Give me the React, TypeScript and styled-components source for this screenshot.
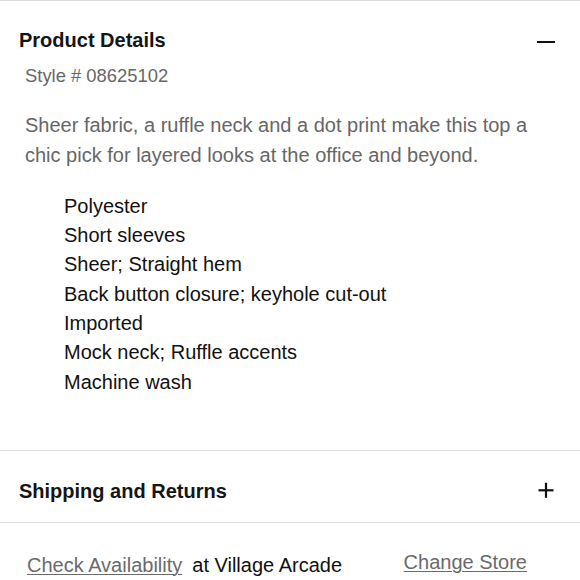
import React from 'react';
import styled, { createGlobalStyle } from 'styled-components';

const GlobalStyle = createGlobalStyle`
	body {
		margin: 0;
		background: #fff;
		font-family: "Liberation Sans", Arial, Helvetica, sans-serif;
		color: #111;
	}
`;

const Page = styled.div`
	width: 580px;
	height: 580px;
	overflow: hidden;
`;

const Section = styled.section`
	border-top: 1px solid #dcdcdc;
`;

const Header = styled.div<{ $top: number; $bottom: number }>`
	display: flex;
	align-items: center;
	justify-content: space-between;
	padding: ${(p) => p.$top}px 25px ${(p) => p.$bottom}px 19px;
`;

const Heading = styled.h2`
	margin: 0;
	font-size: 20px;
	line-height: 24px;
	font-weight: 700;
	color: #151515;
`;

const Toggle = styled.svg`
	display: block;
	width: 18px;
	height: 24px;
	color: #111;
`;

const Body = styled.div`
	padding: 0 0 53px 25px;
`;

const StyleNo = styled.p`
	margin: 11.6px 0 0;
	font-size: 18.4px;
	line-height: 24px;
	color: #676767;
`;

const Description = styled.p`
	margin: 22.8px 0 0;
	width: 520px;
	font-size: 20px;
	line-height: 30px;
	color: #666;
`;

const Features = styled.ul`
	list-style: none;
	margin: 21.5px 0 0;
	padding: 0 0 0 39px;
	font-size: 20px;
	line-height: 29.3px;
	color: #111;
`;

const StoreRow = styled.div`
	display: flex;
	justify-content: space-between;
	align-items: flex-start;
	padding: 30px 53px 0 27px;
	border-top: 1px solid #dcdcdc;
	font-size: 20px;
	line-height: 24px;
`;

const StoreInfo = styled.div`
	display: flex;
	gap: 10px;
	color: #111;
`;

const StoreLink = styled.a<{ $raise?: boolean }>`
	color: #6a6a6a;
	text-decoration: underline;
	text-underline-offset: 2px;
	text-decoration-thickness: 1px;
	cursor: pointer;
	margin-top: ${(p) => (p.$raise ? -3.4 : 0)}px;
`;

const features = [
	'Polyester',
	'Short sleeves',
	'Sheer; Straight hem',
	'Back button closure; keyhole cut-out',
	'Imported',
	'Mock neck; Ruffle accents',
	'Machine wash',
];

function MinusIcon() {
	return (
		<Toggle viewBox="0 0 18 24" aria-hidden="true">
			<rect x="0" y="13" width="18" height="2" fill="currentColor" />
		</Toggle>
	);
}

function PlusIcon() {
	return (
		<Toggle viewBox="0 0 18 24" aria-hidden="true">
			<rect x="1.5" y="10.2" width="15" height="2.2" fill="currentColor" />
			<rect x="7.9" y="3.8" width="2.2" height="15" fill="currentColor" />
		</Toggle>
	);
}

function App() {
	return (
		<>
			<GlobalStyle />
			<Page>
				<Section>
					<Header $top={27} $bottom={0}>
						<Heading>Product Details</Heading>
						<MinusIcon />
					</Header>
					<Body>
						<StyleNo>Style # 08625102</StyleNo>
						<Description>
							Sheer fabric, a ruffle neck and a dot print make this top a chic pick for layered looks at the office and beyond.
						</Description>
						<Features>
							{features.map((f) => (
								<li key={f}>{f}</li>
							))}
						</Features>
					</Body>
				</Section>
				<Section>
					<Header $top={28} $bottom={19}>
						<Heading>Shipping and Returns</Heading>
						<PlusIcon />
					</Header>
				</Section>
				<StoreRow>
					<StoreInfo>
						<StoreLink>Check Availability</StoreLink>
						<span>at Village Arcade</span>
					</StoreInfo>
					<StoreLink $raise>Change Store</StoreLink>
				</StoreRow>
			</Page>
		</>
	);
}

export default App;
